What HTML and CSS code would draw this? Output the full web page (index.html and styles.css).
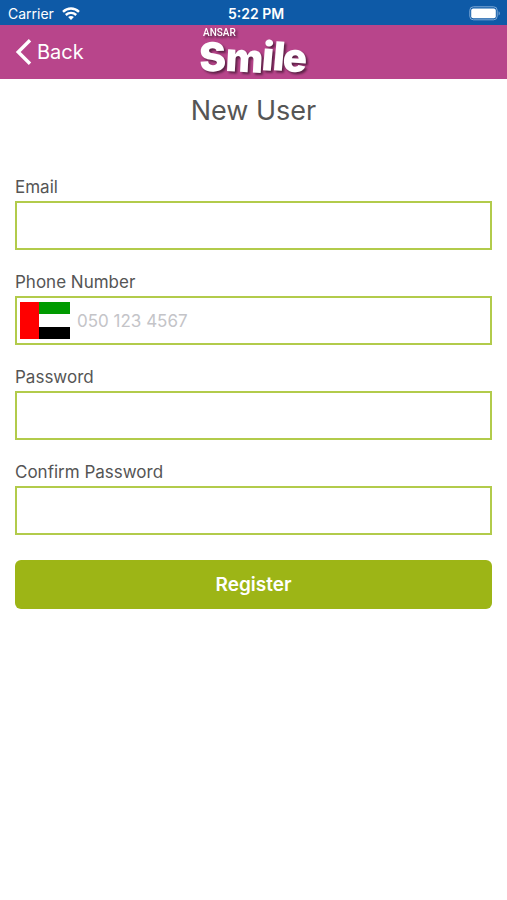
FILE: index.html
```html
<!DOCTYPE html>
<html lang="en">
<head>
<meta charset="utf-8">
<meta name="viewport" content="width=device-width, initial-scale=1">
<title>New User</title>
<link rel="stylesheet" href="styles.css">
</head>
<body>
<div class="status">
  <div class="carrier">
    <span>Carrier</span>
    <svg width="18" height="13" viewBox="0 0 18 13" fill="none" stroke="#fff" stroke-width="2.4" aria-hidden="true">
      <path d="M1 4.8C5.6.4 12.4.4 17 4.8"/>
      <path d="M3.8 8c3-2.8 7.4-2.8 10.4 0"/>
      <path d="M9 13 6.1 10.1c1.6-1.5 4.2-1.5 5.8 0z" fill="#fff" stroke="none"/>
    </svg>
  </div>
  <div class="time">5:22 PM</div>
  <svg class="battery" width="32" height="15" viewBox="0 0 32 15" aria-hidden="true">
    <rect x=".8" y=".8" width="27.4" height="13" rx="3.6" fill="none" stroke="#7fa9d6" stroke-width="1"/>
    <rect x="2.2" y="2.4" width="24.6" height="9.8" rx="2" fill="#fff"/>
    <path d="M29.6 5.2c1.6.7 1.6 3.6 0 4.3z" fill="#7fa9d6"/>
  </svg>
</div>
<header class="navbar">
  <a class="back" href="#">
    <svg width="17" height="28" viewBox="0 0 17 28" fill="none" stroke="#fff" stroke-width="3.4" aria-hidden="true">
      <path d="M15 2.2 3.2 14 15 25.8"/>
    </svg>
    <span>Back</span>
  </a>
  <svg class="logo" width="116" height="54" viewBox="0 0 116 54" role="img" aria-label="Ansar Smile">
    <text class="brand" x="7" y="11">ANSAR</text>
    <text class="smile" x="4 29 65 76 86" y="47 46 45 45 46" rotate="-3 3 5 5 4">Smile</text>
  </svg>
</header>
<main>
  <h1>New User</h1>
  <form>
    <div class="field">
      <label for="email">Email</label>
      <input class="box" id="email" type="email">
    </div>
    <div class="field">
      <label for="phone">Phone Number</label>
      <div class="box phone">
        <svg width="50" height="37" viewBox="0 0 50 37" aria-hidden="true">
          <path fill="#fff" d="M0 0h50v37H0z"/>
          <path fill="#009a00" d="M18 0h32v12H18z"/>
          <path fill="#000" d="M18 25h32v12H18z"/>
          <path fill="#f00" d="M0 0h19v37H0z"/>
        </svg>
        <input id="phone" type="tel" placeholder="050 123 4567">
      </div>
    </div>
    <div class="field">
      <label for="password">Password</label>
      <input class="box" id="password" type="password">
    </div>
    <div class="field">
      <label for="confirm">Confirm Password</label>
      <input class="box" id="confirm" type="password">
    </div>
    <button type="submit">Register</button>
  </form>
</main>
</body>
</html>
```
FILE: styles.css
```css
* {
  box-sizing: border-box;
}

body {
  margin: 0;
  background: #fff;
  color: #555;
  font-family: Inter, "Liberation Sans", sans-serif;
  font-size: 17px;
}

.status {
  display: grid;
  grid-template-columns: 1fr auto 1fr;
  align-items: center;
  height: 25px;
  padding: 2px 6px 0 8px;
  background: #0e5aa7;
  color: #fff;
  font-size: 14px;
}

.carrier {
  display: flex;
  align-items: center;
  gap: 8px;
}

.time {
  padding-left: 3px;
  font-weight: 600;
}

.battery {
  justify-self: end;
}

.navbar {
  display: grid;
  grid-template-columns: 1fr auto 1fr;
  align-items: center;
  height: 54px;
  padding: 0 15px;
  background: #b8458b;
}

.back {
  display: flex;
  align-items: center;
  gap: 5px;
  color: #fff;
  font-size: 20px;
  text-decoration: none;
}

.logo {
  overflow: visible;
  filter: drop-shadow(2px 2px 1px #5b2045);
}

.logo text {
  fill: #fff;
}

.brand {
  font-family: Roboto, sans-serif;
  font-size: 10px;
  font-weight: 500;
}

.smile {
  font-family: Inter, sans-serif;
  font-size: 40px;
  font-weight: 900;
}

main {
  padding: 12px 15px 24px;
}

h1 {
  margin: 0 0 46px;
  font-size: 27px;
  font-weight: 400;
  line-height: 40px;
  text-align: center;
}

.field {
  display: flex;
  flex-direction: column;
  gap: 4px;
  margin-bottom: 22px;
}

label {
  line-height: 20px;
}

.box {
  width: 100%;
  height: 49px;
  padding: 0 3px;
  border: 2px solid #b2cb4b;
  border-radius: 0;
  background: #fff;
}

input {
  color: #555;
  font: inherit;
  outline: none;
}

.phone {
  display: flex;
  align-items: center;
  gap: 7px;
}

.phone input {
  flex: 1;
  min-width: 0;
  padding: 0;
  border: 0;
}

.phone input::placeholder {
  color: #c4c4c8;
  opacity: 1;
}

button {
  width: 100%;
  height: 49px;
  margin-top: 3px;
  border: 0;
  border-radius: 6px;
  background: #9db516;
  color: #fff;
  font: inherit;
  font-size: 19px;
  font-weight: 600;
}
```
